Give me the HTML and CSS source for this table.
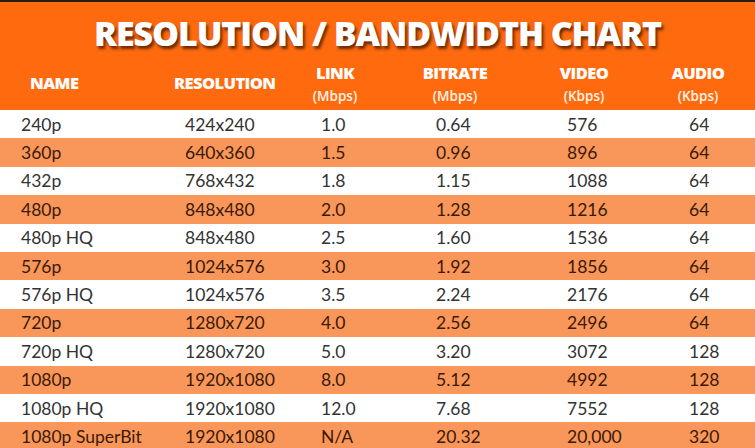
FILE: index.html
```html
<!DOCTYPE html>
<html>
<head>
<meta charset="utf-8">
<link rel="stylesheet" href="styles.css">
</head>
<body>
<div class="chart">
  <header class="head">
    <h1 class="title">RESOLUTION / BANDWIDTH CHART</h1>
    <div class="cols">
      <div class="col c-name"><span class="lbl">NAME</span></div>
      <div class="col c-res"><span class="lbl">RESOLUTION</span></div>
      <div class="col c-ctr"><span class="lbl">LINK</span><span class="unit">(Mbps)</span></div>
      <div class="col c-ctr"><span class="lbl">BITRATE</span><span class="unit">(Mbps)</span></div>
      <div class="col c-ctr"><span class="lbl">VIDEO</span><span class="unit">(Kbps)</span></div>
      <div class="col c-ctr c-audio"><span class="lbl">AUDIO</span><span class="unit">(Kbps)</span></div>
    </div>
  </header>
  <div class="rows">
    <div class="row"><span>240p</span><span>424x240</span><span>1.0</span><span>0.64</span><span>576</span><span class="au">64</span></div>
    <div class="row alt"><span>360p</span><span>640x360</span><span>1.5</span><span>0.96</span><span>896</span><span class="au">64</span></div>
    <div class="row"><span>432p</span><span>768x432</span><span>1.8</span><span>1.15</span><span>1088</span><span class="au">64</span></div>
    <div class="row alt"><span>480p</span><span>848x480</span><span>2.0</span><span>1.28</span><span>1216</span><span class="au">64</span></div>
    <div class="row"><span>480p HQ</span><span>848x480</span><span>2.5</span><span>1.60</span><span>1536</span><span class="au">64</span></div>
    <div class="row alt"><span>576p</span><span>1024x576</span><span>3.0</span><span>1.92</span><span>1856</span><span class="au">64</span></div>
    <div class="row"><span>576p HQ</span><span>1024x576</span><span>3.5</span><span>2.24</span><span>2176</span><span class="au">64</span></div>
    <div class="row alt"><span>720p</span><span>1280x720</span><span>4.0</span><span>2.56</span><span>2496</span><span class="au">64</span></div>
    <div class="row"><span>720p HQ</span><span>1280x720</span><span>5.0</span><span>3.20</span><span>3072</span><span class="au">128</span></div>
    <div class="row alt"><span>1080p</span><span>1920x1080</span><span>8.0</span><span>5.12</span><span>4992</span><span class="au">128</span></div>
    <div class="row"><span>1080p HQ</span><span>1920x1080</span><span>12.0</span><span>7.68</span><span>7552</span><span class="au">128</span></div>
    <div class="row alt"><span>1080p SuperBit</span><span>1920x1080</span><span>N/A</span><span>20.32</span><span>20,000</span><span class="au">320</span></div>
  </div>
</div>
</body>
</html>
```
FILE: styles.css
```css
* { box-sizing: border-box; }
html, body { margin: 0; padding: 0; }
body { width: 755px; height: 448px; overflow: hidden; background: #fff; }
.chart { width: 755px; display: flex; flex-direction: column; }
.head {
  background: #ff6a0e;
  border-top: 2px solid #2b1a10;
  height: 110px;
  display: flex;
  flex-direction: column;
}
.title {
  margin: 0;
  padding-top: 9px;
  height: 54px;
  text-align: center;
  font-family: "Open Sans", sans-serif;
  font-weight: 800;
  font-size: 34px;
  line-height: 44px;
  letter-spacing: -1.1px;
  color: #fff;
  text-shadow: 2px 3px 3px rgba(60, 20, 0, 0.75);
}
.cols {
  display: grid;
  grid-template-columns: 30px 144px 126px 70px 170px 88px 127px;
  height: 54px;
}
.col {
  display: flex;
  flex-direction: column;
  color: #fff;
  font-family: "Open Sans", sans-serif;
}
.c-name { grid-column: 2; justify-content: center; padding-bottom: 0; }
.c-res { justify-content: center; padding-bottom: 0; }
.c-ctr { align-items: center; padding-top: 7px; }
.c-audio { padding-left: 13px; }
.lbl { font-weight: 800; font-size: 16.5px; line-height: 20px; letter-spacing: -0.6px; }
.unit { font-weight: 600; font-size: 13.5px; line-height: 26px; color: #fff3e8; }
.rows { display: flex; flex-direction: column; }
.row {
  height: 28.4px;
  display: grid;
  grid-template-columns: 164px 136px 115px 131px 121px 67px;
  padding-left: 21px;
  align-items: center;
  font-family: Lato, sans-serif;
  font-size: 17.5px;
  color: #333;
  background: #fff;
}
.row.alt { background: #f99659; color: #3b1a08; }
.row .au { padding-left: 1px; }
```
